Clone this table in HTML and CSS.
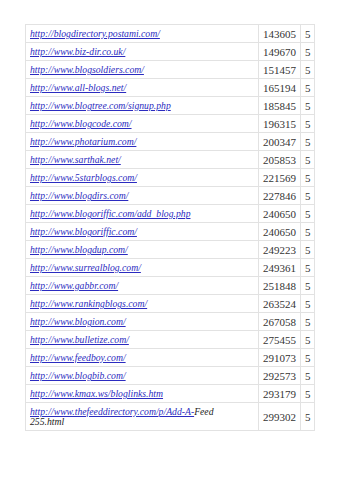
FILE: index.html
```html
<!DOCTYPE html>
<html>
<head>
<meta charset="utf-8">
<link rel="stylesheet" href="styles.css">
</head>
<body>
<table class="list">
<colgroup><col class="c1"><col class="c2"><col class="c3"></colgroup>
<tr><td class="url"><a href="#">http://blogdirectory.postami.com/</a></td><td class="num">143605</td><td class="pr">5</td></tr>
<tr><td class="url"><a href="#">http://www.biz-dir.co.uk/</a></td><td class="num">149670</td><td class="pr">5</td></tr>
<tr><td class="url"><a href="#">http://www.blogsoldiers.com/</a></td><td class="num">151457</td><td class="pr">5</td></tr>
<tr><td class="url"><a href="#">http://www.all-blogs.net/</a></td><td class="num">165194</td><td class="pr">5</td></tr>
<tr><td class="url"><a href="#">http://www.blogtree.com/signup.php</a></td><td class="num">185845</td><td class="pr">5</td></tr>
<tr><td class="url"><a href="#">http://www.blogcode.com/</a></td><td class="num">196315</td><td class="pr">5</td></tr>
<tr><td class="url"><a href="#">http://www.photarium.com/</a></td><td class="num">200347</td><td class="pr">5</td></tr>
<tr><td class="url"><a href="#">http://www.sarthak.net/</a></td><td class="num">205853</td><td class="pr">5</td></tr>
<tr><td class="url"><a href="#">http://www.5starblogs.com/</a></td><td class="num">221569</td><td class="pr">5</td></tr>
<tr><td class="url"><a href="#">http://www.blogdirs.com/</a></td><td class="num">227846</td><td class="pr">5</td></tr>
<tr><td class="url"><a href="#">http://www.blogoriffic.com/add_blog.php</a></td><td class="num">240650</td><td class="pr">5</td></tr>
<tr><td class="url"><a href="#">http://www.blogoriffic.com/</a></td><td class="num">240650</td><td class="pr">5</td></tr>
<tr><td class="url"><a href="#">http://www.blogdup.com/</a></td><td class="num">249223</td><td class="pr">5</td></tr>
<tr><td class="url"><a href="#">http://www.surrealblog.com/</a></td><td class="num">249361</td><td class="pr">5</td></tr>
<tr><td class="url"><a href="#">http://www.gabbr.com/</a></td><td class="num">251848</td><td class="pr">5</td></tr>
<tr><td class="url"><a href="#">http://www.rankingblogs.com/</a></td><td class="num">263524</td><td class="pr">5</td></tr>
<tr><td class="url"><a href="#">http://www.blogion.com/</a></td><td class="num">267058</td><td class="pr">5</td></tr>
<tr><td class="url"><a href="#">http://www.bulletize.com/</a></td><td class="num">275455</td><td class="pr">5</td></tr>
<tr><td class="url"><a href="#">http://www.feedboy.com/</a></td><td class="num">291073</td><td class="pr">5</td></tr>
<tr><td class="url"><a href="#">http://www.blogbib.com/</a></td><td class="num">292573</td><td class="pr">5</td></tr>
<tr><td class="url"><a href="#">http://www.kmax.ws/bloglinks.htm</a></td><td class="num">293179</td><td class="pr">5</td></tr>
<tr><td class="url"><a href="#">http://www.thefeeddirectory.com/p/Add-A-</a>Feed<br>255.html</td><td class="num">299302</td><td class="pr">5</td></tr>
</table>
</body>
</html>
```
FILE: styles.css
```css
html, body {
  margin: 0;
  padding: 0;
  background: #fff;
}
body {
  padding: 24px 0 0 25px;
}
.list {
  border-collapse: collapse;
  table-layout: fixed;
  width: 289px;
  color: #222;
}
.c1 { width: 233px; }
.c2 { width: 42px; }
.c3 { width: 14px; }
.list td {
  border: 1px solid #e2e2e2;
  padding: 4px 4px 3px 4px;
  line-height: 10px;
  vertical-align: middle;
  white-space: nowrap;
  overflow: hidden;
}
.list .url {
  font-family: "Liberation Serif", "DejaVu Serif", serif;
  font-style: italic;
  font-size: 9.7px;
}
.list .url a {
  color: #2b2bc0;
  text-decoration: underline;
}
.list .num, .list .pr {
  font-family: "Liberation Serif", "DejaVu Serif", serif;
  font-size: 11px;
  color: #333;
}
.list .pr {
  padding-left: 4px;
  padding-right: 2px;
}
```
